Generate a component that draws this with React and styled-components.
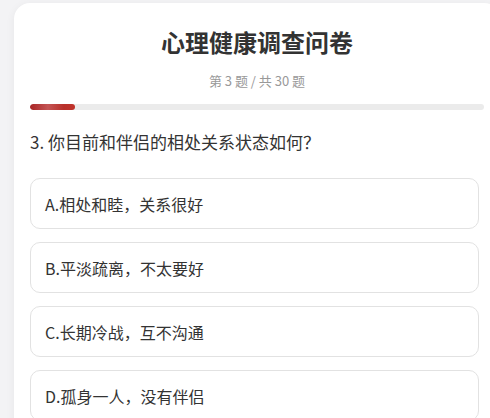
import React from "react";
import styled, { createGlobalStyle } from "styled-components";

const Global = createGlobalStyle`
  html, body { margin: 0; padding: 0; overflow: hidden; }
  body {
    background: #f3f3f5;
    font-family: "Noto Sans CJK SC", "Noto Sans", sans-serif;
  }
`;

const Page = styled.div`
  padding: 3px 0 0 14px;
  height: 418px;
  box-sizing: border-box;
  overflow: hidden;
`;

const Card = styled.div`
  width: 486px;
  min-height: 430px;
  background: #fff;
  border-radius: 16px;
  box-shadow: 0 2px 10px rgba(0, 0, 0, 0.06);
  padding: 22px 16px 0 16px;
  box-sizing: border-box;
`;

const Title = styled.h1`
  margin: 0;
  text-align: center;
  font-size: 24px;
  line-height: 34px;
  font-weight: 700;
  color: #333;
`;

const Sub = styled.div`
  margin-top: 13px;
  text-align: center;
  font-size: 13px;
  line-height: 18px;
  color: #999;
`;

const Track = styled.div`
  margin-top: 14px;
  height: 6px;
  border-radius: 3px;
  background: #ebebeb;
  overflow: hidden;
`;

const Fill = styled.div`
  height: 100%;
  border-radius: 3px;
  background: linear-gradient(90deg, #a82525 0%, #c45555 40%, #b8302a 75%, #c0332b 100%);
`;

const Question = styled.div`
  margin-top: 20px;
  font-size: 17px;
  line-height: 24px;
  color: #333;
`;

const Options = styled.div`
  margin-top: 24px;
  margin-right: 5px;
  display: flex;
  flex-direction: column;
  gap: 13px;
`;

const Option = styled.div`
  height: 51px;
  box-sizing: border-box;
  border: 1px solid #e2e2e2;
  border-radius: 10px;
  display: flex;
  align-items: center;
  padding-left: 14px;
  font-size: 16px;
  color: #333;
  background: #fff;
`;

const options = [
  "A.相处和睦，关系很好",
  "B.平淡疏离，不太要好",
  "C.长期冷战，互不沟通",
  "D.孤身一人，没有伴侣",
];

export default function App() {
  const current = 3;
  const total = 30;
  return (
    <>
      <Global />
      <Page>
        <Card>
          <Title>心理健康调查问卷</Title>
          <Sub>第 {current} 题 / 共 {total} 题</Sub>
          <Track>
            <Fill style={{ width: `${(current / total) * 100}%` }} />
          </Track>
          <Question>3. 你目前和伴侣的相处关系状态如何？</Question>
          <Options>
            {options.map((o) => (
              <Option key={o}>{o}</Option>
            ))}
          </Options>
        </Card>
      </Page>
    </>
  );
}
